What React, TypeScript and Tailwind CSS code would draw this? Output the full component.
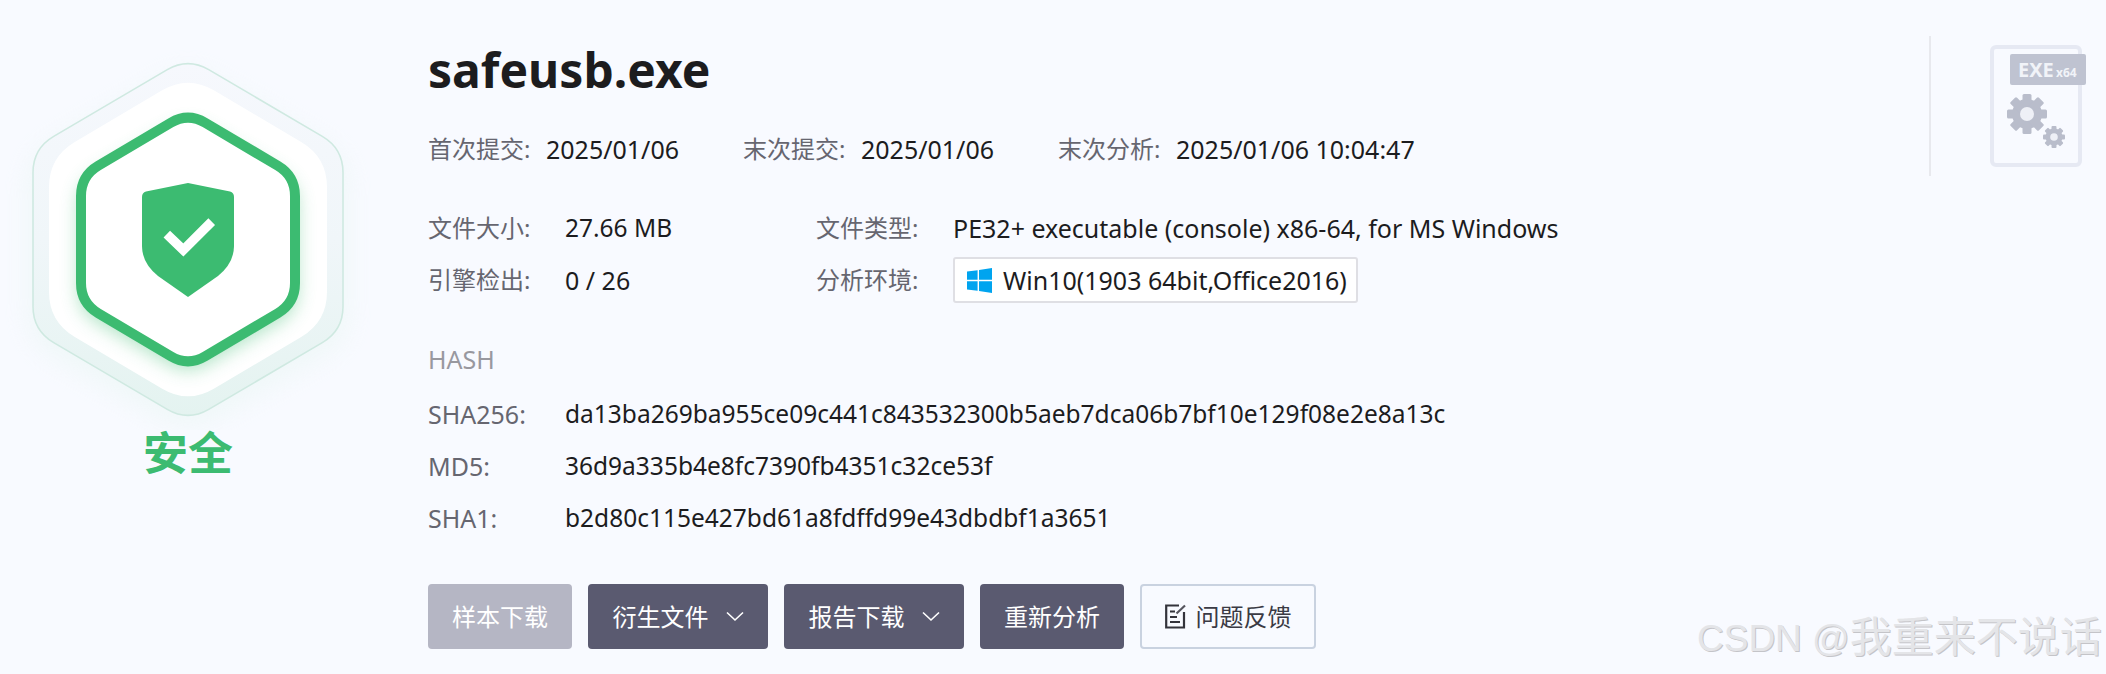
import React from "react";

const BODY = "font-['Noto_Sans','Noto_Sans_CJK_SC',sans-serif]";

function hexPath(cx: number, cy: number, w: number, h: number, r: number) {
  const v = [
    [cx, cy - h / 2],
    [cx + w / 2, cy - h / 4],
    [cx + w / 2, cy + h / 4],
    [cx, cy + h / 2],
    [cx - w / 2, cy + h / 4],
    [cx - w / 2, cy - h / 4],
  ];
  let d = "";
  v.forEach((p, i) => {
    const a = v[(i + 5) % 6];
    const b = v[(i + 1) % 6];
    const la = Math.hypot(a[0] - p[0], a[1] - p[1]);
    const lb = Math.hypot(b[0] - p[0], b[1] - p[1]);
    const s = [p[0] + ((a[0] - p[0]) * r) / la, p[1] + ((a[1] - p[1]) * r) / la];
    const e = [p[0] + ((b[0] - p[0]) * r) / lb, p[1] + ((b[1] - p[1]) * r) / lb];
    d += `${i === 0 ? "M" : "L"}${s[0].toFixed(2)} ${s[1].toFixed(2)} Q${p[0].toFixed(2)} ${p[1].toFixed(2)} ${e[0].toFixed(2)} ${e[1].toFixed(2)} `;
  });
  return d + "Z";
}

function Badge() {
  const cx = 188;
  const cy = 239.5;
  return (
    <svg width="376" height="430" viewBox="0 0 376 430" className="block shrink-0">
      <defs>
        <linearGradient id="outerFill" x1="0" y1="0" x2="0" y2="1">
          <stop offset="0" stopColor="#f6f8fd" />
          <stop offset="0.5" stopColor="#f0f6f9" />
          <stop offset="1" stopColor="#e4f3f0" />
        </linearGradient>
        <filter id="soft" x="-30%" y="-30%" width="160%" height="160%">
          <feGaussianBlur stdDeviation="14" />
        </filter>
        <filter id="glow" x="-30%" y="-30%" width="160%" height="160%">
          <feGaussianBlur stdDeviation="9" />
        </filter>
      </defs>
      <path d={hexPath(cx, cy + 10, 316, 365, 26)} fill="#e3f4ee" opacity="0.45" filter="url(#soft)" />
      <path d={hexPath(cx, cy, 310, 364, 24)} fill="url(#outerFill)" stroke="#cfe9e1" strokeWidth="1.6" />
      <path d={hexPath(cx, cy, 278, 329, 30)} fill="#ffffff" />
      <path d={hexPath(cx, cy + 8, 220, 256, 22)} fill="#3cbb71" opacity="0.4" filter="url(#glow)" />
      <path d={hexPath(cx, cy, 214, 254, 20)} fill="#ffffff" stroke="#3cbb71" strokeWidth="10" />
      <path
        d="M188 183 L230 191.5 Q234 192.5 234 197 L234 246 Q234 263 218 276 L188 297 L158 276 Q142 263 142 246 L142 197 Q142 192.5 146 191.5 Z"
        fill="#3cbb71"
      />
      <path d="M166.8 234.2 L183.3 250 L211.7 221.7" fill="none" stroke="#ffffff" strokeWidth="9.4" />
    </svg>
  );
}

function Row({ label, value, valueClass = "text-[25px]" }: { label: string; value: string; valueClass?: string }) {
  return (
    <div className="flex items-center h-[52px]">
      <span className="w-[137px] text-[#666670] shrink-0">{label}</span>
      <span className={`text-[#1c1c1e] ${valueClass}`}>{value}</span>
    </div>
  );
}

function Meta({ label, value, className }: { label: string; value: string; className: string }) {
  return (
    <div className={`flex items-center ${className}`}>
      <span className="w-[118px] text-[#666670] shrink-0">{label}</span>
      <span className="text-[#1c1c1e] text-[25px]">{value}</span>
    </div>
  );
}

function Chevron() {
  return (
    <svg width="18" height="11" viewBox="0 0 18 11" fill="none" stroke="#ffffff" strokeWidth="1.6" className="ml-[17px]">
      <path d="M1 1.5 L9 9 L17 1.5" />
    </svg>
  );
}

function WinLogo() {
  return (
    <svg width="25" height="25" viewBox="0 0 25 25" fill="#00a4ef" className="shrink-0">
      <path d="M0 3.6 L10.6 2.2 V11.8 H0 Z" />
      <path d="M12 2 L25 0 V11.8 H12 Z" />
      <path d="M0 13.2 H10.6 V22.8 L0 21.4 Z" />
      <path d="M12 13.2 H25 V25 L12 23 Z" />
    </svg>
  );
}

function FileIcon() {
  return (
    <svg width="100" height="124" viewBox="0 0 100 124" className="block">
      <rect x="2" y="2" width="88" height="118" rx="4" fill="none" stroke="#e6e9f3" strokeWidth="4" />
      <rect x="20" y="9" width="76" height="31" rx="2" fill="#bfc3d1" />
      <text x="28" y="32" fill="#f1f3f8" fontSize="20" fontWeight="700" fontFamily="Noto Sans">EXE</text>
      <text x="66" y="32" fill="#f1f3f8" fontSize="12" fontWeight="700" fontFamily="Noto Sans">x64</text>
      <g fill="#b9bdcb">
        <circle cx="37" cy="69" r="15" />
        {[0, 45, 90, 135].map((a) => (
          <rect key={a} x="32.5" y="49" width="9" height="40" rx="1.5" transform={`rotate(${a} 37 69)`} />
        ))}
        <circle cx="64" cy="92" r="8.5" />
        {[0, 45, 90, 135].map((a) => (
          <rect key={a} x="61.5" y="81" width="5" height="22" rx="1" transform={`rotate(${a} 64 92)`} />
        ))}
      </g>
      <circle cx="37" cy="69" r="7" fill="#eef0f6" />
      <circle cx="64" cy="92" r="3.8" fill="#eef0f6" />
    </svg>
  );
}

function DarkBtn({ children, className = "" }: { children: React.ReactNode; className?: string }) {
  return (
    <button className={`h-[65px] rounded-[4px] bg-[#5a5a70] text-white flex items-center justify-center ${className}`}>
      {children}
    </button>
  );
}

export default function App() {
  return (
    <div className={`relative w-[2106px] h-[674px] overflow-hidden bg-[#f8faff] flex text-[24px] leading-none ${BODY}`}>
      <div className="w-[376px] shrink-0 flex flex-col items-center">
        <Badge />
        <div className="-mt-[3px] text-[45px] leading-[52px] font-bold text-[#3cbb71]">安全</div>
      </div>

      <div className="ml-[52px] flex-1 flex flex-col">
        <h1 className="mt-[41px] h-[58px] text-[48px] leading-[58px] font-bold text-[#1c1c1e]">safeusb.exe</h1>
        <div className="mt-[35px] h-[30px] flex">
          <Meta label="首次提交:" value="2025/01/06" className="w-[315px]" />
          <Meta label="末次提交:" value="2025/01/06" className="w-[315px]" />
          <Meta label="末次分析:" value="2025/01/06 10:04:47" className="" />
        </div>
        <div className="mt-[38px] flex">
          <div className="w-[388px]">
            <Row label="文件大小:" value="27.66 MB" valueClass="text-[24.5px]" />
            <Row label="引擎检出:" value="0 / 26" />
          </div>
          <div>
            <Row label="文件类型:" value="PE32+ executable (console) x86-64, for MS Windows" />
            <div className="flex items-center h-[52px]">
              <span className="w-[137px] text-[#666670] shrink-0">分析环境:</span>
              <span className="h-[46px] w-[405px] border-2 border-[#dfdfe4] rounded-[3px] bg-white flex items-center pl-[12px] text-[#1c1c1e] text-[25px]">
                <WinLogo />
                <span className="ml-[11px]">Win10(1903 64bit,Office2016)</span>
              </span>
            </div>
          </div>
        </div>
        <div className="mt-[40px] h-[26px] flex items-center text-[#98989f] text-[25px]">HASH</div>
        <div className="mt-[16px] text-[25px]">
          <Row label="SHA256:" value="da13ba269ba955ce09c441c843532300b5aeb7dca06b7bf10e129f08e2e8a13c" valueClass="text-[24.5px]" />
          <Row label="MD5:" value="36d9a335b4e8fc7390fb4351c32ce53f" valueClass="text-[24.5px]" />
          <Row label="SHA1:" value="b2d80c115e427bd61a8fdffd99e43dbdbf1a3651" valueClass="text-[24.5px]" />
        </div>
        <div className="mt-[40px] flex gap-4">
          <button className="h-[65px] w-[144px] rounded-[4px] bg-[#b5b6c4] text-white">样本下载</button>
          <DarkBtn className="w-[180px]">衍生文件<Chevron /></DarkBtn>
          <DarkBtn className="w-[180px]">报告下载<Chevron /></DarkBtn>
          <DarkBtn className="w-[144px]">重新分析</DarkBtn>
          <button className="h-[65px] w-[176px] rounded-[4px] border-2 border-[#c9d2e0] text-[#3a3a44] flex items-center justify-center">
            <svg width="21" height="25" viewBox="0 0 21 25" fill="none" stroke="#33333b" strokeWidth="2.2" className="mr-[10px]">
              <path d="M14 1.5 H1.2 V23.5 H19 V8" />
              <path d="M5 7.5 H10 M5 13 H12 M5 18 H15" />
              <path d="M11.5 9.5 L20 1.5" stroke="#55555e" />
            </svg>
            问题反馈
          </button>
        </div>
      </div>

      <div className="w-[177px] shrink-0 flex">
        <div className="mt-[36px] w-[2px] h-[140px] bg-[#e8e9ee]" />
        <div className="mt-[45px] ml-[59px]">
          <FileIcon />
        </div>
      </div>

      <div className="absolute left-[1697px] top-[612px] h-[52px] flex items-center whitespace-nowrap text-[#e4e5e8] [text-shadow:1px_1px_0_#c4c4c8] font-['Liberation_Sans','Noto_Sans_CJK_SC',sans-serif]">
        <span className="text-[37px]">CSDN @</span>
        <span className="text-[42px]">我重来不说话</span>
      </div>
    </div>
  );
}
